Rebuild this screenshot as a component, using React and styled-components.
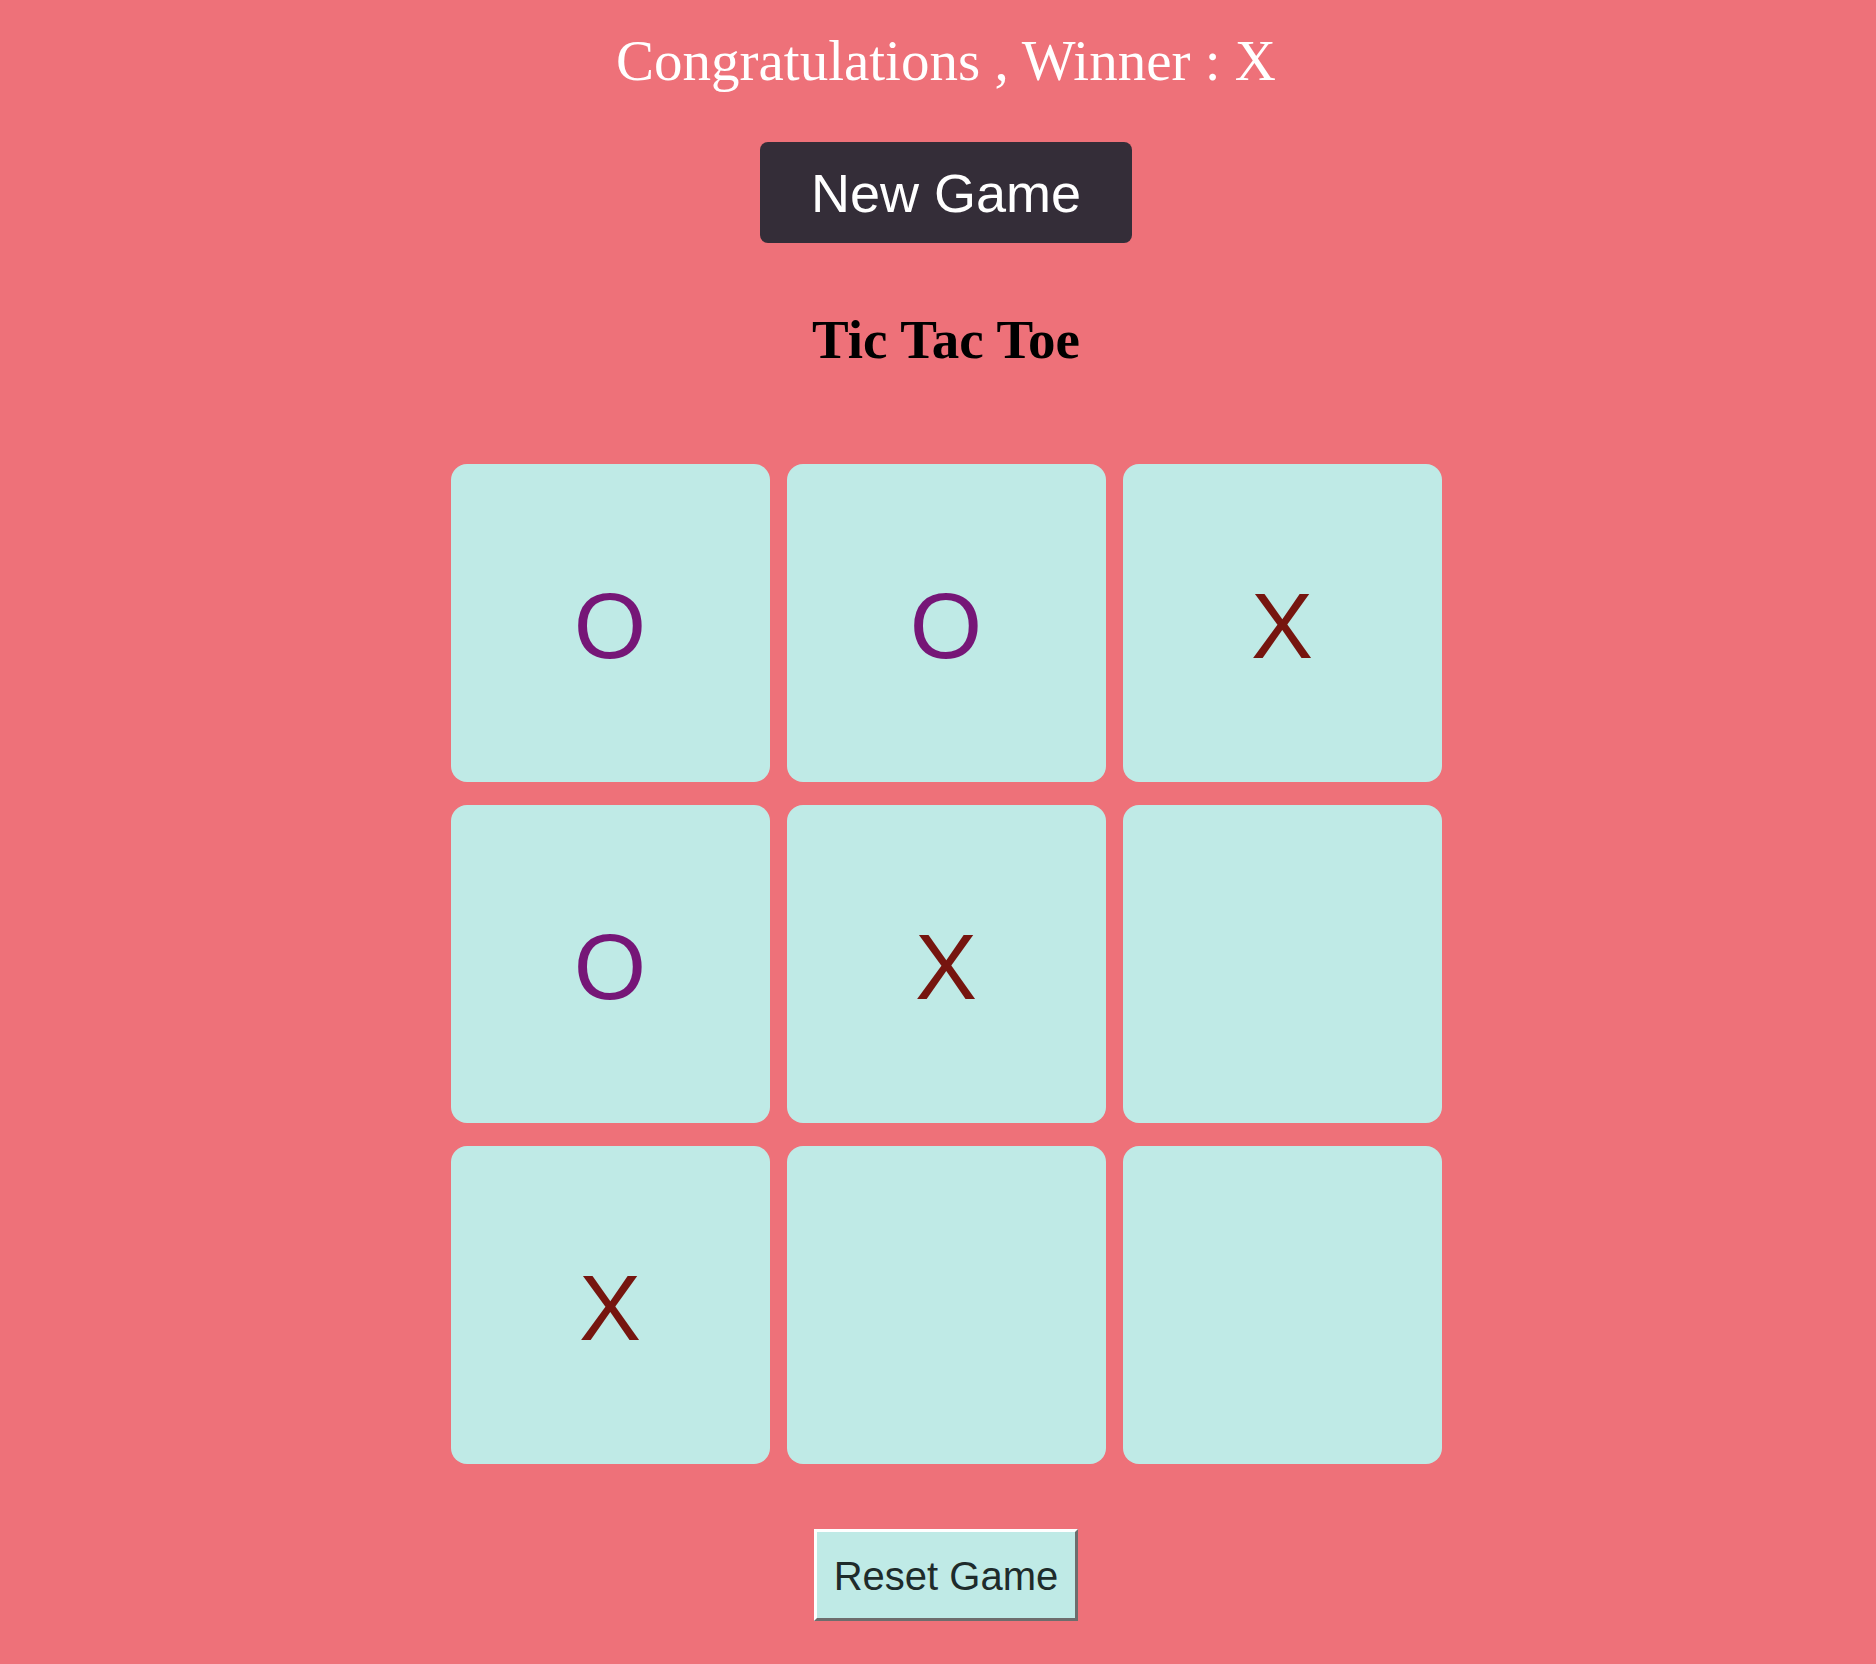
import React from "react";
import styled, { createGlobalStyle } from "styled-components";

const GlobalStyle = createGlobalStyle`
	html, body {
		margin: 0;
		padding: 0;
		background-color: #ee7179;
	}
	* {
		box-sizing: border-box;
	}
`;

const board = ["O", "O", "X", "O", "X", "", "X", "", ""];

function App() {
	return (
		<>
			<GlobalStyle />
			<Page>
				<Winner>Congratulations , Winner : X</Winner>
				<NewGameBtn>New Game</NewGameBtn>
				<Title>Tic Tac Toe</Title>
				<Board>
					{board.map((mark, index) => (
						<Cell key={index} mark={mark}>
							{mark}
						</Cell>
					))}
				</Board>
				<ResetBtn>Reset Game</ResetBtn>
			</Page>
		</>
	);
}

const Page = styled.main`
	display: flex;
	flex-direction: column;
	align-items: center;
	width: 100%;
	min-height: 1664px;
	padding: 32px 0 0 16px;
`;

const Winner = styled.h1`
	margin: 0;
	font-family: "Liberation Serif", "Times New Roman", serif;
	font-weight: 400;
	font-size: 57px;
	line-height: 1;
	color: #ffffff;
`;

const NewGameBtn = styled.button`
	margin-top: 53px;
	height: 101px;
	padding: 0 51px;
	border: none;
	border-radius: 8px;
	background-color: #342d38;
	color: #ffffff;
	font-family: "Liberation Sans", Arial, sans-serif;
	font-size: 54px;
	line-height: 1;
	cursor: pointer;
`;

const Title = styled.h2`
	margin: 69px 0 0;
	font-family: "Liberation Serif", "Times New Roman", serif;
	font-weight: 700;
	font-size: 55px;
	line-height: 1;
	color: #000000;
`;

const Board = styled.div`
	display: grid;
	grid-template-columns: repeat(3, 319px);
	grid-auto-rows: 318px;
	column-gap: 17px;
	row-gap: 23px;
	margin-top: 97px;
`;

const Cell = styled.button`
	display: flex;
	align-items: center;
	justify-content: center;
	padding: 6px 0 0;
	border: none;
	border-radius: 16px;
	background-color: #bfeae6;
	font-family: "Liberation Sans", Arial, sans-serif;
	font-size: 93px;
	line-height: 1;
	color: ${({ mark }) => (mark === "O" ? "#761677" : "#76150f")};
	cursor: pointer;
`;

const ResetBtn = styled.button`
	margin-top: 65px;
	height: 92px;
	padding: 2px 17px 0;
	border: 3px solid;
	border-color: #ffffff #6d6d6d #6d6d6d #ffffff;
	background-color: #bfeae6;
	color: #1e2b2b;
	font-family: "Liberation Sans", Arial, sans-serif;
	font-size: 40px;
	line-height: 1;
	cursor: pointer;
`;

export default App;
